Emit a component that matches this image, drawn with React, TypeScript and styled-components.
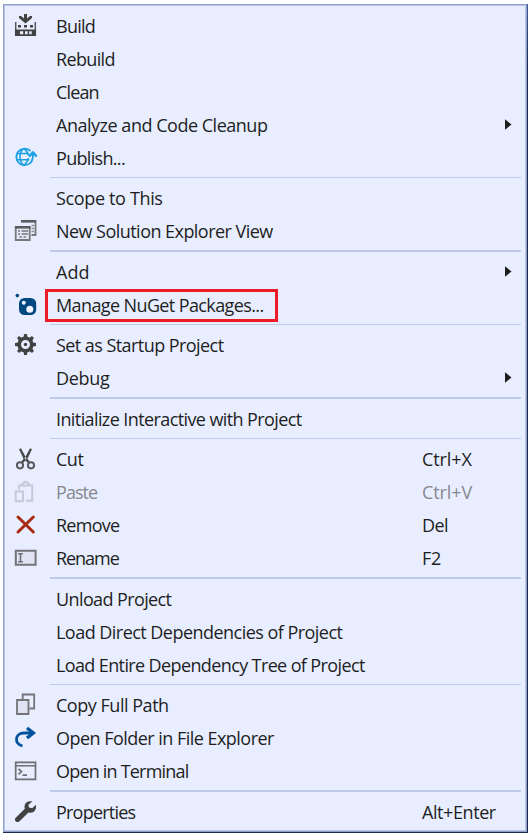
import React from 'react';
import styled, { createGlobalStyle } from 'styled-components';

const Global = createGlobalStyle`
  * { box-sizing: border-box; }
  html, body { margin: 0; background: #fff; }
  body { font-family: "Open Sans", "Segoe UI", sans-serif; }
`;

const Page = styled.div`
  width: 528px;
  height: 833px;
  padding: 4px 0 0 3px;
  overflow: hidden;
`;

const Shadow = styled.div`
  width: 525px;
  height: 829px;
  padding: 0 1px 1px 0;
  background: linear-gradient(#3f5f9b, #1c2a4d 60px);
`;

const Menu = styled.ul`
  width: 524px;
  height: 828px;
  margin: 0;
  padding: 4px 4px 0 4px;
  list-style: none;
  background: #e8eeff;
  border: 1px solid #8e9fca;
  box-shadow: inset 0 0 0 1px #b9c5e8;
`;

const Row = styled.li<{ $disabled?: boolean }>`
  display: grid;
  grid-template-columns: 48px 366px 1fr;
  align-items: center;
  height: 33px;
  font-size: 18px;
  line-height: 31px;
  white-space: nowrap;
  color: ${p => (p.$disabled ? '#868890' : '#1e1e1e')};
`;

const IconCell = styled.span`
  display: flex;
  width: 23px;
  height: 23px;
  margin-left: 6px;
`;

const Icon = styled.svg.attrs({ width: 23, height: 23, viewBox: '0 0 23 23', fill: 'none' })`
  display: block;
  overflow: visible;
`;

const Label = styled.span<{ $tracking: number }>`
  padding-top: 2px;
  letter-spacing: ${p => p.$tracking}px;
`;

const Highlight = styled.span`
  display: flex;
  align-items: center;
  justify-self: start;
  width: 233px;
  height: 33px;
  margin: 1px 0 -1px -11px;
  padding-left: 8px;
  border: 3px solid #ed1c24;

  ${Label} {
    padding-top: 0;
  }
`;

const Arrow = styled.svg`
  display: block;
  margin-left: 83px;
`;

const Divider = styled.li<{ $height: number; $thick?: boolean }>`
  display: flex;
  align-items: center;
  height: ${p => p.$height}px;
  padding: 0 1px 0 42px;
  &::before {
    content: '';
    flex: 1;
    height: ${p => (p.$thick ? 2 : 1)}px;
    background: #bfcaea;
  }
`;

const BuildIcon = () => (
  <Icon>
    <path d="M10 0h3v4.500l3-2.500h2v2L11.500 9.500 5 4V2h2l3 2.500z" fill="#424242" />
    <path d="M1.700 8v14M21.300 8v14" stroke="#55565c" strokeWidth="1.500" />
    <path d="M4 11h3v2.600H4zM10 11h3v2.600h-3zM16 11h3v2.600h-3z" fill="#424242" />
    <path fillRule="evenodd" d="M1 15.500h21V22H1zM6 17.300v2.900h3.200v-2.900zM11 17.300v2.900h2.700v-2.900zM15.200 17.300v2.900h2.500v-2.900z" fill="#424242" />
  </Icon>
);

const PublishIcon = () => (
  <Icon stroke="#1ba1e2" strokeWidth="1.800">
    <path d="M16.500 5A8.300 8.300 0 1 0 10 19.200c5.500.3 9-3.200 9-11" />
    <path d="M9 3C5 7 5 15 9.500 19M10.500 3c2 1.500 3.200 3.800 3.600 6M10 19c2.400-1.700 4-4.200 4.100-7M3 7.500h12M2 13.800h13.500" strokeWidth="1.600" />
    <path d="M14.800 10.500L19 6.500l3.700 4" strokeWidth="2.500" />
  </Icon>
);

const ViewsIcon = () => (
  <Icon>
    <path d="M7.500 2h14v14h-4" stroke="#77777c" strokeWidth="1.800" />
    <path d="M7 2.300h15" stroke="#5c5c60" strokeWidth="2.600" />
    <path d="M17.500 6.500H20M17.500 9.500H20M17.500 12.500H20" stroke="#8d8e99" strokeWidth="1.300" />
    <path d="M1.700 8h14v13h-14z" fill="#e4e7f7" stroke="#77777c" strokeWidth="1.800" />
    <path d="M1 8.300h15.500" stroke="#5c5c60" strokeWidth="2.600" />
    <path d="M4 12h2M7.500 12H14M4 15h2M7.500 15H14M5.500 18H8M9.500 18H12" stroke="#77777c" strokeWidth="1.500" />
  </Icon>
);

const NuGetIcon = () => (
  <Icon>
    <circle cx="3.300" cy="2.600" r="1.800" fill="#004880" />
    <path d="M10.500 5h6.200a5.500 5.500 0 0 1 5.500 5.500v6a5.500 5.500 0 0 1-5.500 5.500h-6.200A5.500 5.500 0 0 1 5 16.500v-6A5.500 5.500 0 0 1 10.500 5z" fill="#004880" />
    <circle cx="9.800" cy="9.700" r="2" fill="#f3f6ff" />
    <circle cx="15.800" cy="16.300" r="3.500" fill="#f3f6ff" />
  </Icon>
);

const GearIcon = () => (
  <Icon>
    <circle cx="11.500" cy="11.500" r="6.300" stroke="#424242" strokeWidth="3.600" />
    <circle cx="11.500" cy="11.500" r="1.700" fill="#424242" />
    {[0, 45, 90, 135, 180, 225, 270, 315].map(a => (
      <path key={a} d="M9.500 4.500L10.100 1h2.800l.6 3.500z" fill="#424242" transform={`rotate(${a} 11.500 11.500)`} />
    ))}
  </Icon>
);

const CutIcon = () => (
  <Icon>
    <path d="M5 2.200l2-1 6 11.300-2.200 2zM18 2.200l-2-1-6 11.300 2.200 2z" fill="#4b4b4e" />
    <path d="M11 12l-3 3.500M12 12l3 3.500" stroke="#4b4b4e" strokeWidth="2.300" />
    <circle cx="6" cy="18.300" r="3.100" stroke="#5a5a5e" strokeWidth="2" />
    <circle cx="17" cy="18.300" r="3.100" stroke="#5a5a5e" strokeWidth="2" />
  </Icon>
);

const PasteIcon = () => (
  <Icon stroke="#c6c8d3" strokeWidth="1.900">
    <path d="M5 9.500V5.500h13.200v15.300H12" />
    <path d="M7.700 5C8 3.500 9 3.300 9.500 3.200c.3-2 3.800-2 4.100 0 1.200.1 1.700.6 1.900 1.800" />
    <path d="M1.700 11.500h7.300v9.700H1.700z" />
  </Icon>
);

const RemoveIcon = () => (
  <Icon>
    <path d="M4 4L19.300 19M19.300 4L4 19" stroke="#a82a10" strokeWidth="3" strokeLinecap="round" />
  </Icon>
);

const RenameIcon = () => (
  <Icon>
    <path d="M1.800 4.700h19.800v14H1.800z" fill="#e2e2f5" stroke="#737378" strokeWidth="2" />
    <path d="M4.200 7.800h1.500l.8.700.8-.7h1.500M4.200 15.800h1.500l.8-.7.8.7h1.500M6.500 8.500v6.600" stroke="#6b6b72" strokeWidth="1.500" />
  </Icon>
);

const CopyIcon = () => (
  <Icon stroke="#737378" strokeWidth="1.800">
    <path d="M8.700 6.500V1.500h11.500v14H15.300" />
    <path d="M3 7h11.500v14H3z" fill="#e2e2f5" />
  </Icon>
);

const OpenIcon = () => (
  <Icon stroke="#00539c">
    <path d="M8.500 20C0 18 .5 7 10 7h10" strokeWidth="2.800" />
    <path d="M13 2l6.300 5-6.300 5" strokeWidth="3.400" />
  </Icon>
);

const TerminalIcon = () => (
  <Icon stroke="#6d6d72">
    <path d="M1.700 3.300h19.800v17H1.700z" strokeWidth="1.700" />
    <path d="M1.500 6.800h20" strokeWidth="1.500" />
    <path d="M4.500 9.800l3 2.700-3 2.800M8.500 16.200h4.500" strokeWidth="1.700" />
  </Icon>
);

const WrenchIcon = () => (
  <Icon>
    <path d="M18.300 1.500C13 .2 9.500 4 10.800 8.800L1.700 17.700c-2.300 2.600 1.300 5.800 3.800 3.600l9-8.900c4.700 1.300 8.600-2.200 7.300-7.700l-3.600 3.600-3.200-.7-.6-2.900z" fill="#424242" />
  </Icon>
);

type Item = {
  label: string;
  tracking: number;
  icon?: React.ReactNode;
  keys?: string;
  keysTracking?: number;
  more?: boolean;
  disabled?: boolean;
  boxed?: boolean;
};
type Entry = Item | { gap: number; thick?: boolean };

const entries: Entry[] = [
  { label: 'Build', tracking: -0.75, icon: <BuildIcon /> },
  { label: 'Rebuild', tracking: -0.65 },
  { label: 'Clean', tracking: -0.85 },
  { label: 'Analyze and Code Cleanup', tracking: -0.48, more: true },
  { label: 'Publish...', tracking: -0.68, icon: <PublishIcon /> },
  { gap: 7 },
  { label: 'Scope to This', tracking: -0.35 },
  { label: 'New Solution Explorer View', tracking: -0.54, icon: <ViewsIcon /> },
  { gap: 8, thick: true },
  { label: 'Add', tracking: 0, more: true },
  { label: 'Manage NuGet Packages...', tracking: -0.61, icon: <NuGetIcon />, boxed: true },
  { gap: 7 },
  { label: 'Set as Startup Project', tracking: -0.56, icon: <GearIcon /> },
  { label: 'Debug', tracking: -0.3, more: true },
  { gap: 8, thick: true },
  { label: 'Initialize Interactive with Project', tracking: -0.6 },
  { gap: 7 },
  { label: 'Cut', tracking: -0.5, icon: <CutIcon />, keys: 'Ctrl+X', keysTracking: -0.1 },
  { label: 'Paste', tracking: -0.95, icon: <PasteIcon />, keys: 'Ctrl+V', keysTracking: -0.1, disabled: true },
  { label: 'Remove', tracking: -0.75, icon: <RemoveIcon />, keys: 'Del', keysTracking: -0.6 },
  { label: 'Rename', tracking: -1.05, icon: <RenameIcon />, keys: 'F2', keysTracking: -0.3 },
  { gap: 8, thick: true },
  { label: 'Unload Project', tracking: -0.61 },
  { label: 'Load Direct Dependencies of Project', tracking: -0.53 },
  { label: 'Load Entire Dependency Tree of Project', tracking: -0.62 },
  { gap: 7 },
  { label: 'Copy Full Path', tracking: -0.47, icon: <CopyIcon /> },
  { label: 'Open Folder in File Explorer', tracking: -0.53, icon: <OpenIcon /> },
  { label: 'Open in Terminal', tracking: -0.8, icon: <TerminalIcon /> },
  { gap: 8, thick: true },
  { label: 'Properties', tracking: -0.78, icon: <WrenchIcon />, keys: 'Alt+Enter', keysTracking: -0.42 },
];

const MenuItem = ({ item }: { item: Item }) => {
  const text = <Label $tracking={item.tracking}>{item.label}</Label>;
  return (
    <Row $disabled={item.disabled}>
      <IconCell>{item.icon}</IconCell>
      {item.boxed ? <Highlight>{text}</Highlight> : text}
      {item.keys && <Label $tracking={item.keysTracking ?? 0}>{item.keys}</Label>}
      {item.more && (
        <Arrow width="7" height="11" viewBox="0 0 7 11">
          <path d="M0 0.300L6.500 5.500L0 10.700z" fill="#1e1e1e" />
        </Arrow>
      )}
    </Row>
  );
};

export default function App() {
  return (
    <Page>
      <Global />
      <Shadow>
        <Menu>
          {entries.map((entry, i) =>
            'gap' in entry ? (
              <Divider key={i} $height={entry.gap} $thick={entry.thick} />
            ) : (
              <MenuItem key={i} item={entry} />
            )
          )}
        </Menu>
      </Shadow>
    </Page>
  );
}
